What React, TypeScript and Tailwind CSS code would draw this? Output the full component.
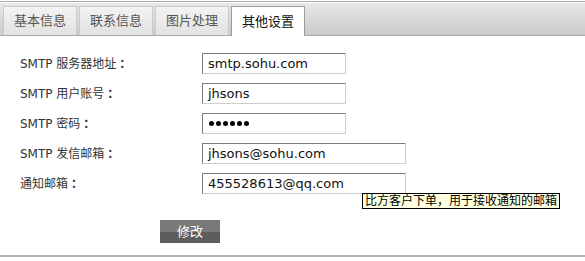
import React from "react";

const font = { fontFamily: '"DejaVu Sans", "Noto Sans CJK SC", sans-serif' };

function Tab({ label, active }: { label: string; active?: boolean }) {
  return active ? (
    <div className="w-[74px] h-[30px] -mb-[1px] flex items-center justify-center border border-b-0 border-[#9c9c9c] bg-white text-[13px] text-[#111]">
      {label}
    </div>
  ) : (
    <div className="w-[74px] h-[29px] flex items-center justify-center border border-b-0 border-[#cacaca] bg-gradient-to-b from-[#f3f3f3] to-[#e2e2e2] text-[13px] text-[#555]">
      {label}
    </div>
  );
}

function Field({ value, wide, password }: { value: string; wide?: boolean; password?: boolean }) {
  return (
    <div
      className={`${wide ? "w-[204px]" : "w-[144px]"} h-[21px] flex items-center pl-[5px] bg-white border border-t-[#7c7c7c] border-l-[#7c7c7c] border-b-[#cdcdcd] border-r-[#cdcdcd] text-[13px] text-[#111]`}
    >
      {password ? (
        <div className="flex gap-[2px] ml-[1px]">
          {[0, 1, 2, 3, 4, 5].map((i) => (
            <span key={i} className="block w-[5px] h-[5px] rounded-full bg-black" />
          ))}
        </div>
      ) : (
        value
      )}
    </div>
  );
}

function Row({ label, children }: { label: string; children: React.ReactNode }) {
  return (
    <div className="flex items-center h-[21px]">
      <div className="w-[182px] text-[12px] text-[#333] flex items-center">
        <span>{label}</span>
        <span className="ml-[3px] font-bold">：</span>
      </div>
      {children}
    </div>
  );
}

export default function App() {
  return (
    <div className="relative w-[585px] h-[261px] bg-white overflow-hidden" style={font}>
      <div className="pt-[1px]">
        <div className="h-[1px] bg-[#ababab]" />
        <div className="h-[1px]" />
        <div className="h-[33px] flex items-end gap-[2px] pl-[3px] bg-gradient-to-b from-[#e8e8e8] to-[#cacaca] border-b border-[#a9a9a9]">
          <Tab label="基本信息" />
          <Tab label="联系信息" />
          <Tab label="图片处理" />
          <Tab label="其他设置" active />
        </div>
      </div>

      <div className="pl-[20px] pt-[17px] flex flex-col gap-[9px]">
        <Row label="SMTP 服务器地址">
          <Field value="smtp.sohu.com" />
        </Row>
        <Row label="SMTP 用户账号">
          <Field value="jhsons" />
        </Row>
        <Row label="SMTP 密码">
          <Field value="" password />
        </Row>
        <Row label="SMTP 发信邮箱">
          <Field value="jhsons@sohu.com" wide />
        </Row>
        <Row label="通知邮箱">
          <Field value="455528613@qq.com" wide />
        </Row>
      </div>

      <div className="pl-[160px] mt-[26px]">
        <button className="w-[60px] h-[23px] flex items-center justify-center text-white text-[13px] bg-[linear-gradient(#797979_50%,#5d5d5d_50%)]">
          修改
        </button>
      </div>

      <div className="mt-[12px] h-[2px] bg-[#b2b2b2]" />

      <div className="absolute left-[362px] top-[193px] h-[16px] px-[2px] flex items-center border border-black bg-[#ffffe1] text-[12px] leading-none text-black whitespace-nowrap">
        比方客户下单，用于接收通知的邮箱
      </div>
    </div>
  );
}
